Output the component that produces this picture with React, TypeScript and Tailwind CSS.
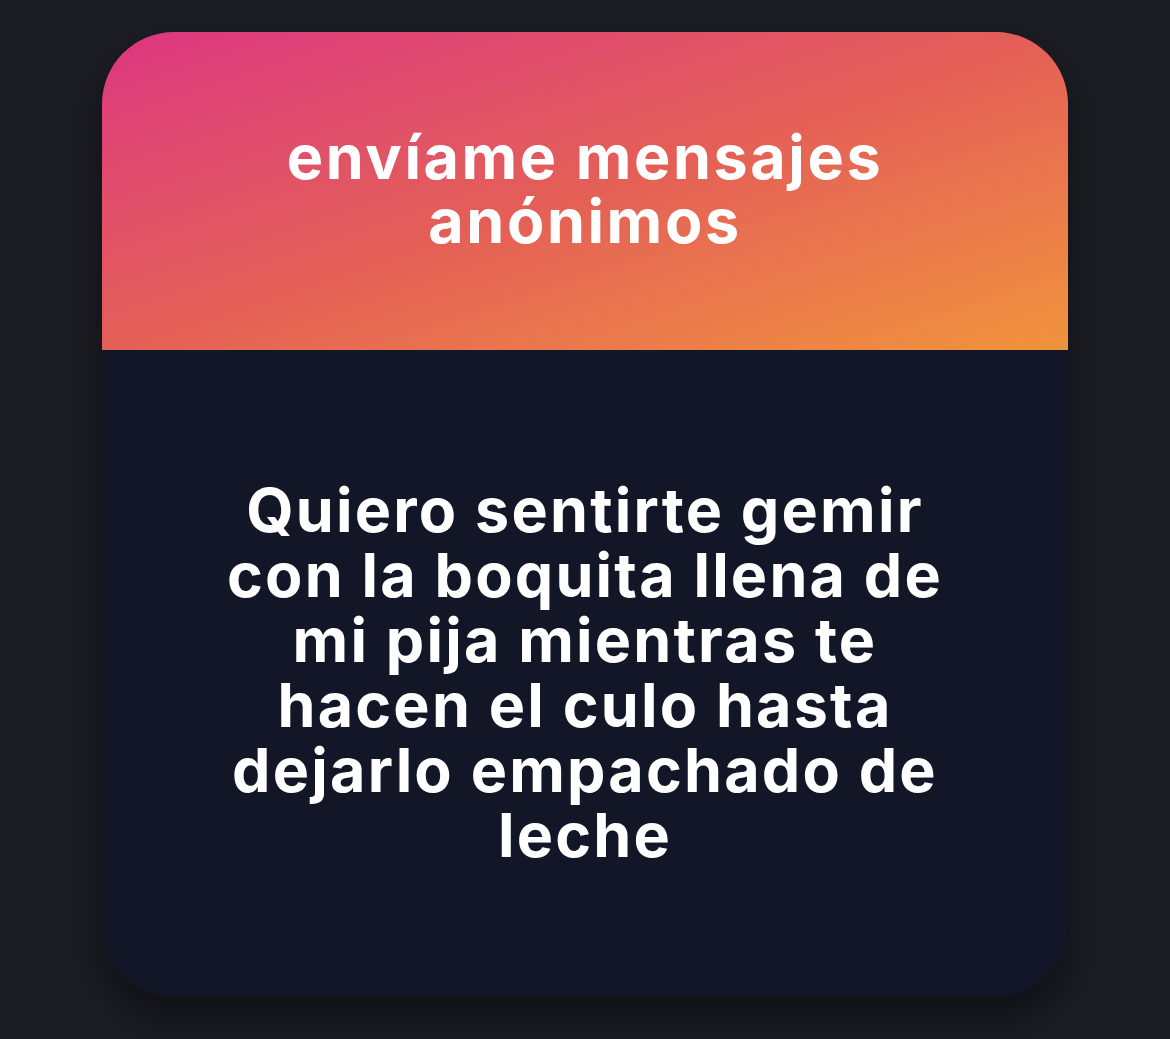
import React from "react";

export default function App() {
  const lines = [
    "Quiero sentirte gemir",
    "con la boquita llena de",
    "mi pija mientras te",
    "hacen el culo hasta",
    "dejarlo empachado de",
    "leche",
  ];
  return (
    <div className="w-[1170px] h-[1039px] bg-[#1c1d24] flex justify-center pt-[32px] overflow-hidden" style={{ fontFamily: "Inter, 'Liberation Sans', sans-serif" }}>
      <div className="w-[966px] h-[965px] rounded-[72px] overflow-hidden flex flex-col bg-[#121626] shadow-[0_20px_40px_rgba(0,0,0,0.45)]">
        <div className="h-[318px] bg-gradient-to-br from-[#dc357f] via-[#e45f56] to-[#f0933a] flex flex-col items-center justify-center pb-[4px]">
          <div className="text-white font-bold text-[61px] leading-[64px] tracking-[2.6px] text-center">
            envíame mensajes
            <br />
            anónimos
          </div>
        </div>
        <div className="flex-1 flex flex-col items-center justify-center pb-[2px]">
          <div className="text-white font-bold text-[61px] leading-[65px] tracking-[2.2px] text-center">
            {lines.map((l) => (
              <div key={l}>{l}</div>
            ))}
          </div>
        </div>
      </div>
    </div>
  );
}
